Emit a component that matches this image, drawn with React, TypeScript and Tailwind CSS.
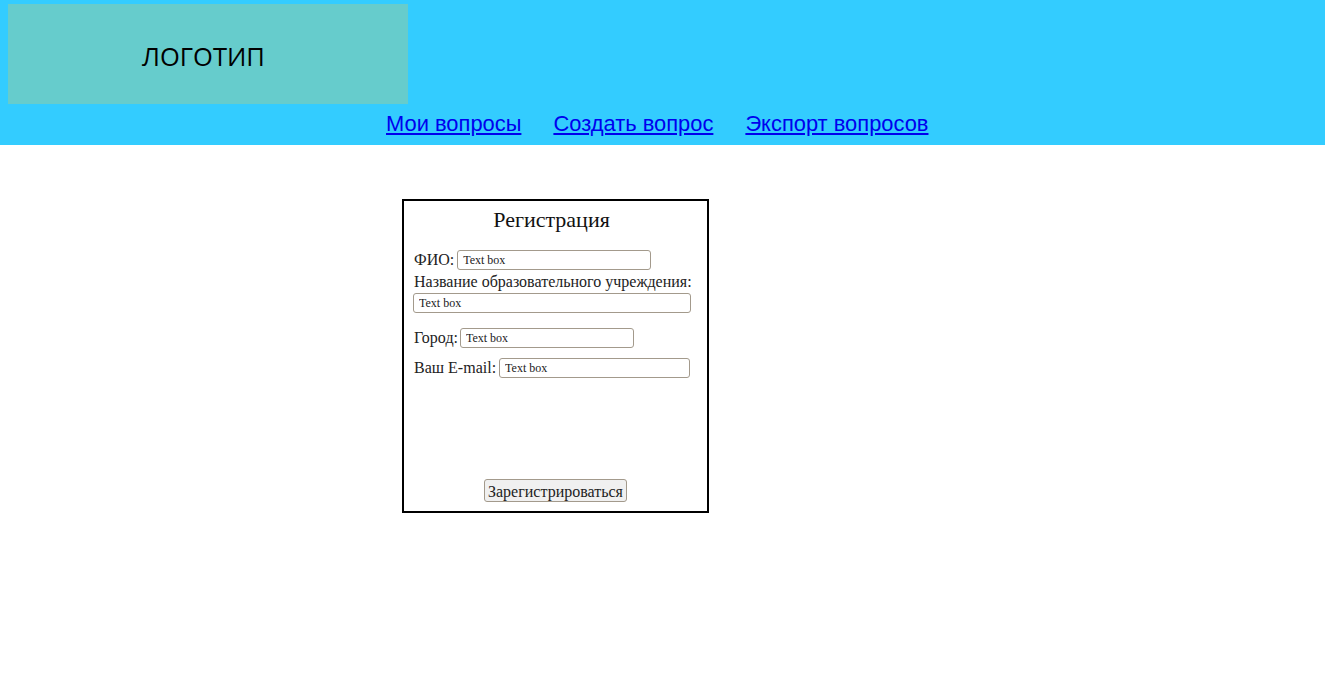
const serif = "font-['Liberation_Serif','Times_New_Roman',serif]";

function Field({ value, className }: { value: string; className: string }) {
  return (
    <input
      type="text"
      defaultValue={value}
      className={`h-[20px] rounded-[3px] border border-[#a39a8c] bg-white px-[5px] pt-[1px] text-[12px] text-[#222] outline-none ${serif} ${className}`}
    />
  );
}

export default function App() {
  return (
    <div className="min-h-[695px] bg-white">
      <header className="h-[145px] bg-[#33ccff] pt-[4px]">
        <div className="ml-[8px] flex h-[100px] w-[400px] items-center justify-center bg-[#66cccc] pr-[9px] pt-[4px]">
          <span className="font-['Open_Sans',sans-serif] text-[25.5px] font-normal text-black">ЛОГОТИП</span>
        </div>
        <nav className="mt-[5px] flex gap-[32px] pl-[386px] font-['Liberation_Sans',Arial,sans-serif] text-[21.9px] leading-[30px]">
          <a href="#" className="text-[#0000ee] underline">Мои вопросы</a>
          <a href="#" className="text-[#0000ee] underline">Создать вопрос</a>
          <a href="#" className="text-[#0000ee] underline">Экспорт вопросов</a>
        </nav>
      </header>

      <main className="pl-[402px] pt-[54px]">
        <div className={`flex h-[314px] w-[307px] flex-col border-2 border-black px-[10px] pt-[6px] pb-[9px] text-[16px] text-[#222] ${serif}`}>
          <h1 className="pr-[8px] text-center text-[22px] leading-[26px] text-[#111]">Регистрация</h1>

          <div className="mt-[17px] flex h-[20px] items-center gap-[3px]">
            <span>ФИО:</span>
            <Field value="Text box" className="w-[194px]" />
          </div>

          <div className="mt-[2px] leading-[19px]">Название образовательного учреждения:</div>
          <Field value="Text box" className="mt-[2px] w-[278px] -ml-[1px]" />

          <div className="mt-[15px] flex h-[20px] items-center gap-[2px]">
            <span>Город:</span>
            <Field value="Text box" className="w-[174px]" />
          </div>

          <div className="mt-[10px] flex h-[20px] items-center gap-[3px]">
            <span>Ваш E-mail:</span>
            <Field value="Text box" className="w-[191px]" />
          </div>

          <div className="mt-auto flex justify-center">
            <button className="h-[23px] rounded-[3px] border border-[#a39a8c] bg-[#f0f0f0] px-[3px] text-[16px] text-[#222]">
              Зарегистрироваться
            </button>
          </div>
        </div>
      </main>
    </div>
  );
}
